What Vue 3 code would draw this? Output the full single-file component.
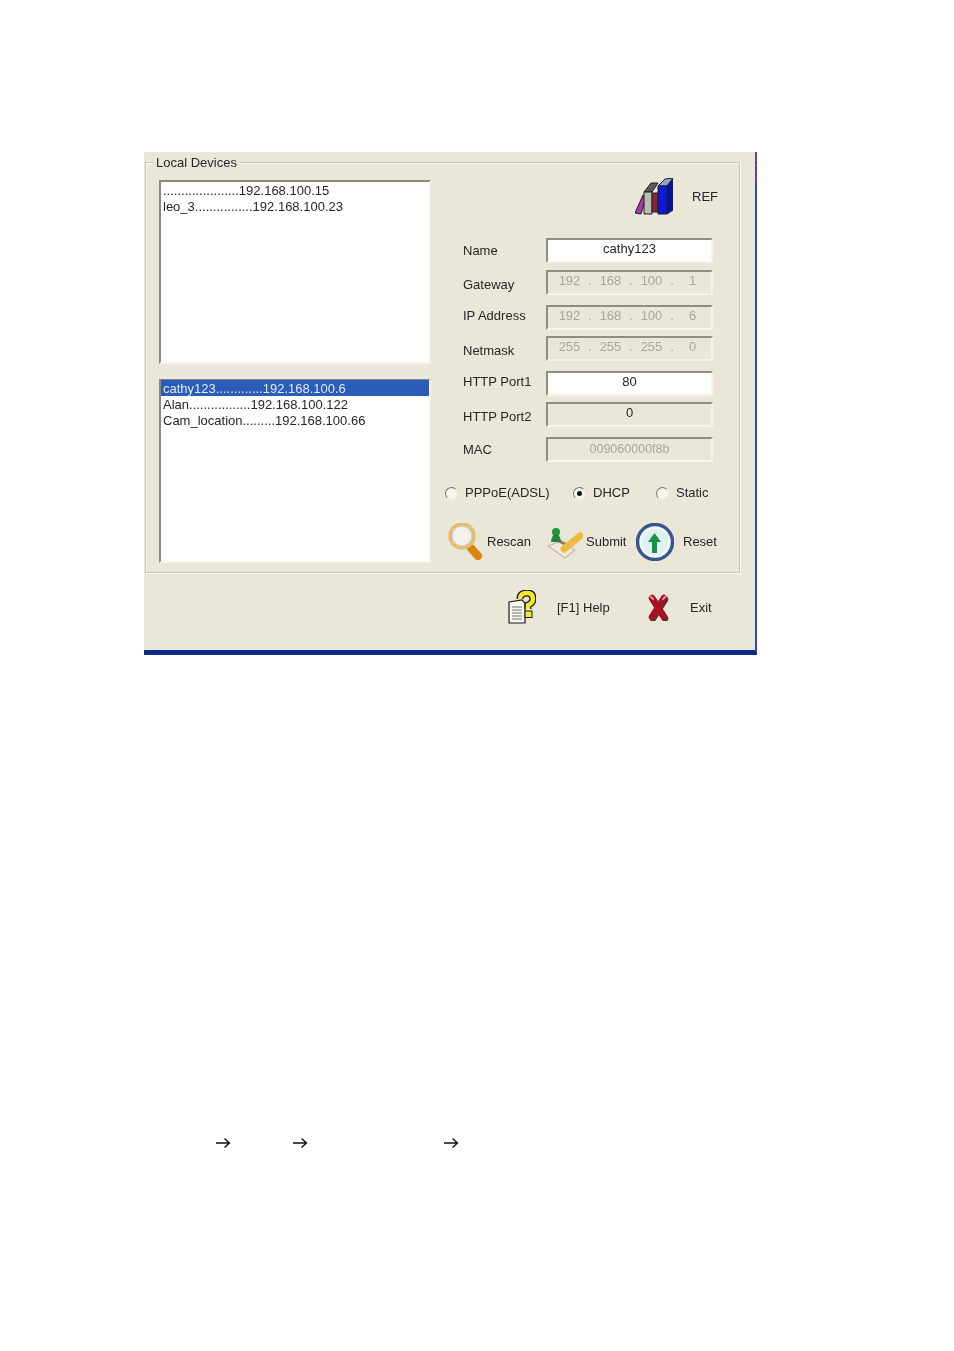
<script setup>
const topList = ['.....................192.168.100.15', 'leo_3................192.168.100.23']
const bottomList = [
  'cathy123.............192.168.100.6',
  'Alan.................192.168.100.122',
  'Cam_location.........192.168.100.66',
]

const fields = [
  { label: 'Name', value: 'cathy123', white: true },
  { label: 'Gateway', octets: ['192', '168', '100', '1'] },
  { label: 'IP Address', octets: ['192', '168', '100', '6'] },
  { label: 'Netmask', octets: ['255', '255', '255', '0'] },
  { label: 'HTTP Port1', value: '80', white: true },
  { label: 'HTTP Port2', value: '0' },
  { label: 'MAC', value: '009060000f8b', muted: true },
]

const radios = [
  { label: 'PPPoE(ADSL)', checked: false },
  { label: 'DHCP', checked: true },
  { label: 'Static', checked: false },
]
</script>

<template>
  <div class="page">
    <div class="window">
      <span class="edge-noise"></span>
      <div class="group">
        <span class="legend">Local Devices</span>

        <div class="lists">
          <ul class="list">
            <li v-for="item in topList" :key="item">{{ item }}</li>
          </ul>
          <ul class="list second">
            <li
              v-for="(item, index) in bottomList"
              :key="item"
              :class="{ selected: index === 0 }"
            >
              {{ item }}
            </li>
          </ul>
        </div>

        <div class="settings">
          <div class="ref-row">
            <svg class="books" viewBox="0 0 38 37" width="38" height="37">
              <g stroke="#1c1c2c" stroke-width="1" stroke-linejoin="round">
                <polygon points="0,35 8,17 11,19 6,36" fill="#a83aa4" />
                <polygon points="9,14 16,5 23,5 17,14" fill="#5c5c58" />
                <polygon points="9,14 17,14 17,36 9,36" fill="#bcbcb4" />
                <polygon points="17,15 23,15 23,34 17,34" fill="#8a2430" />
                <polygon points="23,8 30,1 38,0 32,8" fill="#90a4cc" />
                <polygon points="32,8 38,1 38,32 32,36" fill="#0812a0" />
                <polygon points="23,8 32,8 32,36 23,36" fill="#0a1ad8" />
              </g>
            </svg>
            <span>REF</span>
          </div>

          <div v-for="field in fields" :key="field.label" class="field-row">
            <span class="field-label">{{ field.label }}</span>
            <div class="field" :class="{ white: field.white, muted: field.muted }">
              <div v-if="field.octets" class="octets">
                <template v-for="(octet, index) in field.octets" :key="index">
                  <span class="octet">{{ octet }}</span>
                  <span class="dot">{{ index < 3 ? '.' : '' }}</span>
                </template>
              </div>
              <span v-else>{{ field.value }}</span>
            </div>
          </div>

          <div class="radios">
            <label v-for="radio in radios" :key="radio.label" class="radio-item">
              <span class="radio" :class="{ checked: radio.checked }"></span>
              {{ radio.label }}
            </label>
          </div>

          <div class="actions">
            <div class="action rescan">
              <svg viewBox="0 0 36 38" width="36" height="38">
                <line x1="24" y1="25" x2="31" y2="33" stroke="#d9860f" stroke-width="8" stroke-linecap="round" />
                <circle cx="15" cy="13" r="12" fill="#f1f0ea" stroke="#e4bd6c" stroke-width="3.5" />
                <circle cx="15" cy="13" r="9.8" fill="none" stroke="#c9c6d8" stroke-width="1" />
              </svg>
              <span>Rescan</span>
            </div>
            <div class="action submit">
              <svg viewBox="0 0 36 36" width="36" height="36">
                <polygon points="1,22 12,18 28,26 18,34" fill="#efe8dc" stroke="#cdb6a8" stroke-width="1.2" />
                <line x1="12" y1="17" x2="22" y2="22" stroke="#a07060" stroke-width="3" />
                <line x1="17" y1="25" x2="33" y2="12" stroke="#eebc3c" stroke-width="7" stroke-linecap="round" />
                <circle cx="9" cy="8" r="4" fill="#1c9a3c" />
                <path d="M4 18 Q5 10 9 10 Q13 10 14 18 Z" fill="#1c8a38" />
              </svg>
              <span>Submit</span>
            </div>
            <div class="action reset">
              <svg viewBox="0 0 38 38" width="38" height="38">
                <circle cx="19" cy="19" r="17.5" fill="#f2f8f8" stroke="#3a568f" stroke-width="3.5" />
                <circle cx="19" cy="19" r="13" fill="#dff0ee" />
                <polygon points="18.5,10 25,19 21,19 21,30 16,30 16,19 12,19" fill="#13924a" />
              </svg>
              <span>Reset</span>
            </div>
          </div>
        </div>
      </div>

      <div class="footer">
        <svg class="help-icon" viewBox="0 0 28 34" width="28" height="34">
          <polygon points="1,12 14,10 17,13 17,33 1,33" fill="#f6f6ee" stroke="#1c1c1c" stroke-width="1.2" />
          <path d="M4 17H14M4 20H14M4 23H14M4 26H14M4 29H14" stroke="#77776e" stroke-width="1.2" />
          <path d="M12 9 Q12 3 19 3 Q25 3 25 9 Q25 13 20 15 L20 19" fill="none" stroke="#1c1c1c" stroke-width="7" />
          <path d="M12 9 Q12 3 19 3 Q25 3 25 9 Q25 13 20 15 L20 19" fill="none" stroke="#f4e92c" stroke-width="4.4" />
          <rect x="17" y="21" width="7" height="6.5" fill="#f4e92c" stroke="#1c1c1c" />
        </svg>
        <span class="help-text">[F1] Help</span>
        <svg class="exit-icon" viewBox="0 0 22 28" width="22" height="28">
          <path d="M5 5L17 24M17 5L5 24" stroke="#4a3636" stroke-width="6.5" stroke-linecap="round" transform="translate(1 1.5)" />
          <path d="M5 5L17 24M17 5L5 24" stroke="#a81024" stroke-width="6.5" stroke-linecap="round" />
          <path d="M3.5 3.5L6 6M18.5 3.5L16 6" stroke="#ee8c9c" stroke-width="2" stroke-linecap="round" />
        </svg>
        <span>Exit</span>
      </div>
    </div>

    <div class="arrows">
      <svg v-for="n in 3" :key="n" viewBox="0 0 15 12" width="15" height="12">
        <path d="M0 6H13M8.5 1.5L13.5 6L8.5 10.5" fill="none" stroke="#111" stroke-width="1.4" />
      </svg>
    </div>
  </div>
</template>

<style scoped>
.page {
  padding: 152px 0 0 144px;
  font-family: "Liberation Sans", Arial, sans-serif;
  font-size: 13px;
  color: #26262a;
}

.window {
  position: relative;
  box-sizing: border-box;
  width: 613px;
  height: 503px;
  padding: 10px 0 0 1px;
  background: #eae7d9;
  border-right: 2px solid #2a4fa8;
  border-bottom: 5px solid #0c2a86;
  filter: blur(0.35px);
}

.edge-noise {
  position: absolute;
  top: 0;
  right: -2px;
  width: 2px;
  height: 31px;
  background: repeating-linear-gradient(#b03060 0 3px, #2a4fa8 3px 6px);
}

.group {
  position: relative;
  box-sizing: border-box;
  display: flex;
  width: 595px;
  height: 411px;
  padding: 17px 0 0 13px;
  border: 1px solid #c6c4b2;
  box-shadow: 1px 1px 0 #fbfaf2, inset 1px 1px 0 #fbfaf2;
}

.legend {
  position: absolute;
  top: -8px;
  left: 7px;
  padding: 0 3px;
  line-height: 16px;
  background: #eae7d9;
}

.lists {
  display: flex;
  flex: none;
  flex-direction: column;
  gap: 15px;
  width: 272px;
}

.list {
  box-sizing: border-box;
  height: 184px;
  margin: 0;
  padding: 0;
  list-style: none;
  background: #fff;
  border-top: 2px solid #8b897c;
  border-left: 2px solid #8b897c;
  border-right: 2px solid #f5f4ea;
  border-bottom: 2px solid #f5f4ea;
}

.list.second {
  border-top-width: 1px;
}

.list li {
  padding: 2px 0 0 2px;
  line-height: 14px;
  white-space: nowrap;
}

.list li.selected {
  background: #2a5cb8;
  color: #dfe9fb;
}

.settings {
  flex: 1;
  min-width: 0;
}

.ref-row {
  display: flex;
  align-items: center;
  justify-content: flex-end;
  gap: 19px;
  height: 37px;
  margin: -2px 21px 23px 0;
}

.field-row {
  display: flex;
  height: 25px;
  margin-bottom: 10px;
  padding-left: 32px;
}

.field-row:nth-of-type(even) {
  margin-bottom: 6px;
}

.field-row:nth-of-type(2) {
  margin-bottom: 7px;
}

.field-label {
  width: 83px;
  line-height: 30px;
  white-space: nowrap;
}

.field-row:nth-of-type(even) .field-label {
  line-height: 22px;
}

.field-row:nth-of-type(2) .field-label,
.field-row:nth-of-type(8) .field-label {
  line-height: 25px;
}

.field {
  box-sizing: border-box;
  width: 167px;
  height: 25px;
  line-height: 18px;
  text-align: center;
  border-top: 2px solid #8f8d80;
  border-left: 2px solid #8f8d80;
  border-right: 2px solid #f5f4ea;
  border-bottom: 2px solid #f5f4ea;
}

.field.white {
  background: #fff;
}

.field.muted {
  color: #a9a79a;
  font-size: 12.5px;
  line-height: 20px;
}

.octets {
  display: flex;
  padding-left: 5px;
  color: #a9a79a;
}

.octet {
  flex: none;
  width: 33px;
  text-align: center;
}

.dot {
  flex: none;
  width: 8px;
}

.radios {
  display: flex;
  height: 16px;
  margin-top: 23px;
  padding-left: 14px;
}

.radio-item {
  display: flex;
  flex: none;
  align-items: center;
  gap: 7px;
  width: 128px;
  line-height: 16px;
  white-space: nowrap;
}

.radio-item:nth-child(2) {
  width: 83px;
}

.radio-item:nth-child(3) {
  width: auto;
}

.radio {
  position: relative;
  box-sizing: border-box;
  width: 13px;
  height: 13px;
  border: 1px solid;
  border-color: #75736a #efeee4 #efeee4 #75736a;
  border-radius: 50%;
  background: #f6f6ef;
}

.radio.checked::after {
  content: "";
  position: absolute;
  top: 3px;
  left: 3px;
  width: 5px;
  height: 5px;
  border-radius: 50%;
  background: #111;
}

.actions {
  display: flex;
  margin-top: 22px;
  padding-left: 16px;
}

.action {
  display: flex;
  flex: none;
  align-items: center;
  height: 38px;
}

.action span {
  margin-top: -2px;
}

.rescan {
  width: 100px;
  gap: 4px;
}

.submit {
  width: 89px;
  gap: 3px;
}

.reset {
  gap: 9px;
}

.footer {
  display: flex;
  align-items: center;
  height: 68px;
  padding-left: 363px;
}

.help-text {
  margin-left: 21px;
  width: 90px;
}

.exit-icon {
  margin-right: 21px;
}

.arrows {
  display: flex;
  gap: 62px;
  margin-top: 482px;
  padding-left: 72px;
}

.arrows svg:last-child {
  margin-left: 74px;
}
</style>

<style>
body {
  margin: 0;
  background: #fff;
}
</style>
